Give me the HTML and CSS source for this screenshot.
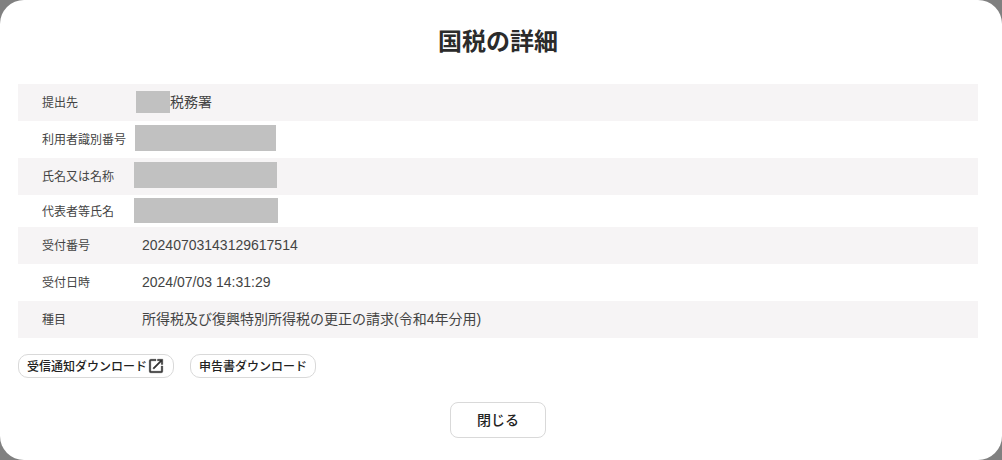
FILE: index.html
```html
<!DOCTYPE html>
<html lang="ja">
<head>
   <meta charset="UTF-8">
   <meta name="viewport" content="width=device-width, initial-scale=1.0">
   <title>国税の詳細</title>
   <link rel="stylesheet" href="styles.css">
</head>
<body>
   <div class="modal">
      <h1 class="title">国税の詳細</h1>
      <div class="detail-list">
         <div class="detail-row">
            <div class="detail-label">提出先</div>
            <div class="detail-value"><span class="mask mask-office"></span><span class="text-jp">税務署</span></div>
         </div>
         <div class="detail-row">
            <div class="detail-label">利用者識別番号</div>
            <div class="detail-value"><span class="mask mask-id"></span></div>
         </div>
         <div class="detail-row">
            <div class="detail-label">氏名又は名称</div>
            <div class="detail-value"><span class="mask mask-name"></span></div>
         </div>
         <div class="detail-row detail-row-short">
            <div class="detail-label">代表者等氏名</div>
            <div class="detail-value"><span class="mask mask-rep"></span></div>
         </div>
         <div class="detail-row">
            <div class="detail-label">受付番号</div>
            <div class="detail-value">20240703143129617514</div>
         </div>
         <div class="detail-row">
            <div class="detail-label">受付日時</div>
            <div class="detail-value">2024/07/03 14:31:29</div>
         </div>
         <div class="detail-row">
            <div class="detail-label">種目</div>
            <div class="detail-value"><span class="text-jp">所得税及び復興特別所得税の更正の請求(令和4年分用)</span></div>
         </div>
      </div>
      <div class="downloads">
         <button class="pill-btn">受信通知ダウンロード
            <svg class="pill-icon" viewBox="0 0 24 24" width="18" height="18"><path d="M19 19H5V5h7V3H5a2 2 0 0 0-2 2v14a2 2 0 0 0 2 2h14a2 2 0 0 0 2-2v-7h-2v7zM14 3v2h3.59l-9.83 9.83 1.41 1.41L19 6.41V10h2V3h-7z"/></svg>
         </button>
         <button class="pill-btn">申告書ダウンロード</button>
      </div>
      <div class="footer">
         <button class="close-btn">閉じる</button>
      </div>
   </div>
</body>
</html>
```

FILE: styles.css
```css
html, body {
   height: 100%;
}
body {
   margin: 0;
   background-color: #808080;
   font-family: "Liberation Sans", "Noto Sans CJK JP", sans-serif;
   color: #444;
   overflow: hidden;
}
.modal {
   height: 460px;
   box-sizing: border-box;
   padding: 0 24px 0 18px;
   background-color: #fff;
   border-radius: 24px;
}
.title {
   margin: 0;
   padding-top: 26px;
   height: 84px;
   box-sizing: border-box;
   font-size: 24px;
   line-height: 32px;
   font-weight: 700;
   text-align: center;
   color: #2b2b2b;
}
.detail-list {
   width: 960px;
}
.detail-row {
   display: flex;
   align-items: center;
   box-sizing: border-box;
   height: 37px;
   padding-bottom: 2px;
}
.detail-row:nth-child(odd) {
   background-color: #f6f4f5;
}
.detail-row-short {
   height: 32px;
}
.detail-label {
   width: 100px;
   padding-left: 24px;
   font-size: 12px;
   flex-shrink: 0;
}
.detail-value {
   display: flex;
   align-items: center;
   font-size: 14px;
}
.text-jp {
   padding-bottom: 2px;
}
.mask {
   display: block;
   background-color: #c1c1c1;
}
.mask-office {
   width: 34px;
   height: 22px;
   margin-left: -6px;
}
.mask-id {
   width: 141px;
   height: 26px;
   margin: 0 0 1px -7px;
}
.mask-name {
   width: 143px;
   height: 26px;
   margin: 0 0 1px -8px;
}
.mask-rep {
   width: 144px;
   height: 25px;
   margin-left: -8px;
}
.downloads {
   display: flex;
   gap: 16px;
   margin-top: 16px;
}
.pill-btn {
   display: flex;
   align-items: center;
   box-sizing: border-box;
   height: 24px;
   padding: 0 8px 2px;
   background-color: #fff;
   border: 1px solid #d9d9d9;
   border-radius: 10px;
   font-family: inherit;
   font-size: 12px;
   font-weight: 500;
   color: #222;
}
.pill-icon {
   fill: #333;
   stroke: #333;
   stroke-width: 0.5;
   margin-top: 2px;
}
.footer {
   display: flex;
   justify-content: center;
   width: 960px;
   margin-top: 24px;
}
.close-btn {
   box-sizing: border-box;
   width: 96px;
   height: 36px;
   padding: 0 0 2px;
   background-color: #fff;
   border: 1px solid #d9d9d9;
   border-radius: 8px;
   font-family: inherit;
   font-size: 14px;
   font-weight: 500;
   color: #222;
}
```
